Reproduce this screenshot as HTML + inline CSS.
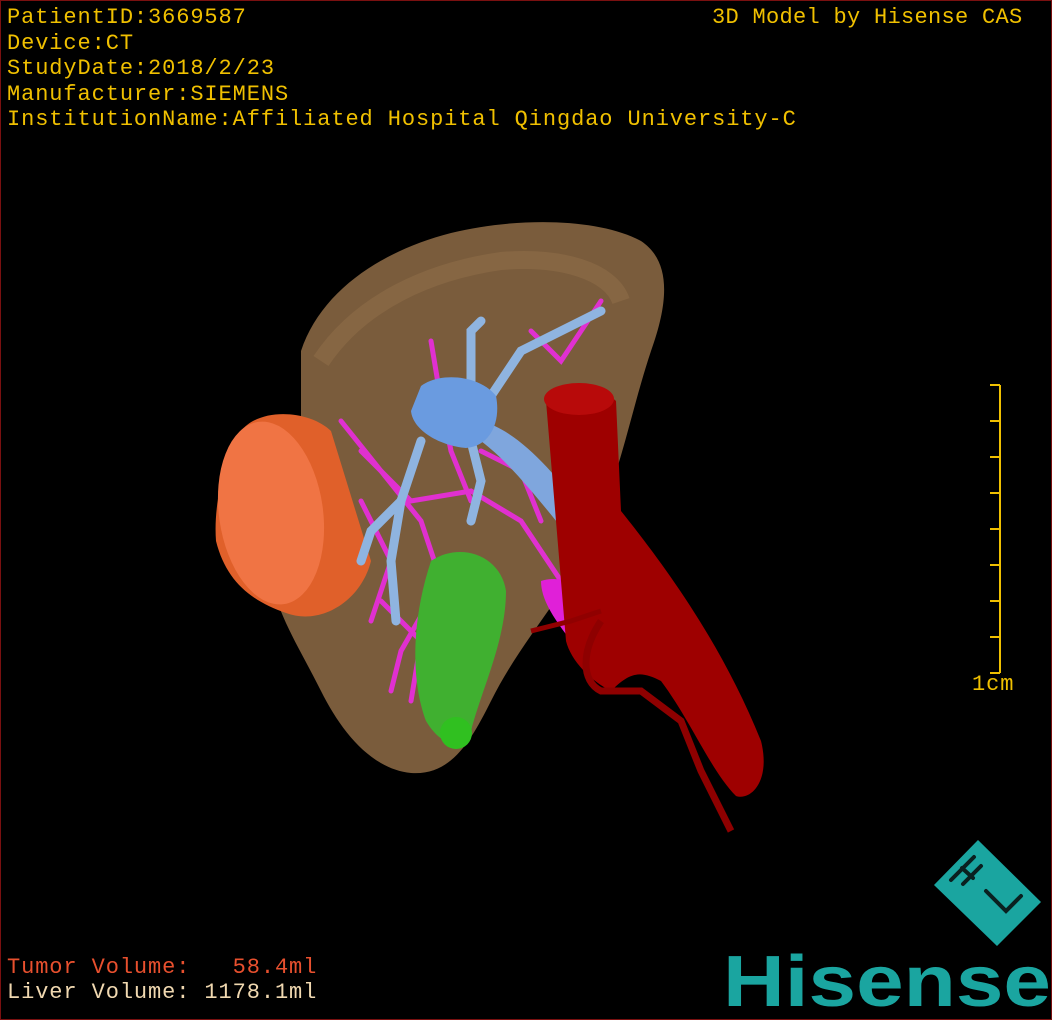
<!DOCTYPE html>
<html><head><meta charset="utf-8"><style>
html,body{margin:0;padding:0;background:#000;}
#f{position:relative;width:1050px;height:1018px;border:1px solid #7a1010;overflow:hidden;background:#000;font-family:"Liberation Mono","DejaVu Sans Mono",monospace;}
.t{position:absolute;font-size:22px;line-height:25.5px;color:#f0c000;white-space:pre;letter-spacing:0.9px;}
</style></head><body><div id="f">
<svg width="1050" height="1018" style="position:absolute;left:0;top:0">
<!-- liver -->
<path d="M300,350 C320,290 380,250 450,232 C520,215 600,218 640,240 C670,260 668,300 650,350 C630,410 620,470 590,540 C560,600 520,640 490,700 C470,740 450,775 410,772 C370,768 340,730 320,690 C300,650 280,620 270,580 C275,520 285,470 300,420 Z" fill="#7a5c3c"/>
<path d="M320,360 C360,300 430,270 500,260 C560,255 610,270 620,300" stroke="#8d6c48" stroke-width="18" fill="none" opacity="0.6"/>
<g stroke="#e030d0" stroke-width="5" fill="none" stroke-linecap="round">
<path d="M340,420 L380,470 L420,520 L440,580 L400,650 L390,690"/>
<path d="M360,450 L410,500 L470,490 L520,520 L560,580"/>
<path d="M430,340 L440,400 L450,450 L470,500"/>
<path d="M530,330 L560,360 L600,300"/>
<path d="M380,600 L420,640 L410,700"/>
<path d="M360,500 L390,560 L370,620"/>
<path d="M480,450 L520,470 L540,520"/>
</g>
<path d="M540,580 C570,570 610,600 612,640 C610,665 590,668 570,640 C555,620 540,600 540,580 Z" fill="#e020d8"/>
<path d="M240,430 C260,405 310,410 330,430 L370,560 C360,600 320,625 285,612 C250,600 225,580 215,540 C212,500 225,455 240,430 Z" fill="#e0602a"/>
<ellipse cx="270" cy="512" rx="52" ry="92" fill="#f07444" transform="rotate(-8 270 512)"/>
<path d="M430,560 C460,540 500,555 505,590 C505,640 480,690 470,730 C460,750 440,745 425,720 C410,680 410,620 430,560 Z" fill="#40b030"/>
<circle cx="455" cy="732" r="16" fill="#30c020"/>
<g stroke="#8fb4e0" stroke-width="9" fill="none" stroke-linecap="round">
<path d="M420,440 L400,500 L390,560 L395,620"/>
<path d="M470,440 L480,480 L470,520"/>
<path d="M480,410 L520,350 L560,330 L600,310"/>
<path d="M470,400 L470,330 L480,320"/>
<path d="M400,500 L370,530 L360,560"/>
</g>
<path d="M480,420 C520,430 560,480 590,520 C605,545 600,565 590,560 C560,530 520,470 480,440 Z" fill="#7fa6dd"/>
<path d="M420,385 C440,370 480,375 495,395 C500,420 490,445 465,447 C440,445 412,430 410,410 Z" fill="#6a9be0"/>
<path d="M545,400 C560,385 600,385 615,400 L620,510 C660,560 720,640 760,740 C770,780 750,800 735,795 C710,770 690,720 660,680 C640,670 630,670 610,690 C590,680 570,660 565,640 L555,520 Z" fill="#9e0000"/>
<ellipse cx="578" cy="398" rx="35" ry="16" fill="#b80a0a"/>
<path d="M600,620 C580,650 580,680 600,690 L640,690 L680,720 L700,770 L730,830" stroke="#8e0000" stroke-width="7" fill="none"/>
<path d="M530,630 L570,620 L600,610" stroke="#900000" stroke-width="5" fill="none"/>
<g stroke="#f0c000" stroke-width="2">
<line x1="999" y1="384" x2="999" y2="672"/>
<line x1="989" y1="384" x2="999" y2="384"/><line x1="989" y1="420" x2="999" y2="420"/>
<line x1="989" y1="456" x2="999" y2="456"/><line x1="989" y1="492" x2="999" y2="492"/>
<line x1="989" y1="528" x2="999" y2="528"/><line x1="989" y1="564" x2="999" y2="564"/>
<line x1="989" y1="600" x2="999" y2="600"/><line x1="989" y1="636" x2="999" y2="636"/>
<line x1="989" y1="672" x2="999" y2="672"/>
</g>
<polygon points="977,839 1040,901 996,945 933,884" fill="#1aa5a0"/>
<g stroke="#0a2020" stroke-width="4" fill="none" stroke-linecap="round">
<path d="M973,856 L950,879 M980,865 L962,883 M961,867 L972,877"/>
<path d="M985,890 L1005,910 L1020,895"/>
</g>
<text x="722" y="1005" font-family="Liberation Sans,sans-serif" font-weight="bold" font-size="72" fill="#1aa5a0" textLength="328" lengthAdjust="spacingAndGlyphs">Hisense</text>
</svg>
<div class="t" style="left:6px;top:4px">PatientID:3669587
Device:CT
StudyDate:2018/2/23
Manufacturer:SIEMENS
InstitutionName:Affiliated Hospital Qingdao University-C</div>
<div class="t" style="left:711px;top:4px;letter-spacing:0.3px">3D Model by Hisense CAS</div>
<div class="t" style="left:971px;top:671px">1cm</div>
<div class="t" style="left:6px;top:954px;color:#e8502e">Tumor Volume:   58.4ml</div>
<div class="t" style="left:6px;top:979px;color:#f0d8b0">Liver Volume: 1178.1ml</div>
</div></body></html>
